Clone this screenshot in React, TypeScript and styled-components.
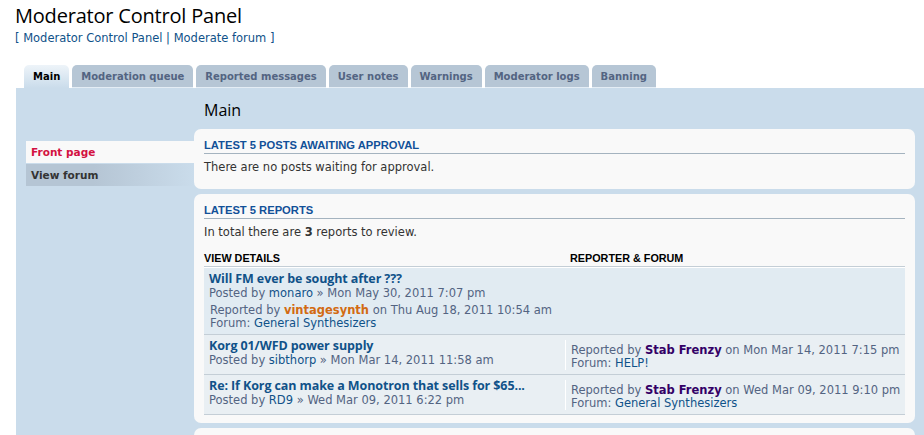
import styled, { createGlobalStyle } from 'styled-components';

const GlobalStyle = createGlobalStyle`
    html, body {
        margin: 0;
        padding: 0;
        background: #ffffff;
    }
    body {
        font-family: "DejaVu Sans", Verdana, sans-serif;
        font-size: 11.5px;
        color: #333333;
    }
    a {
        color: #105289;
        text-decoration: none;
    }
`;

const Page = styled.div`
    padding: 3px 0 0 16px;
    overflow: hidden;
    height: 435px;
    box-sizing: border-box;
`;

const Title = styled.h2`
    margin: 0 0 0 -1px;
    font-family: "Open Sans", "Liberation Sans", sans-serif;
    font-weight: normal;
    font-size: 20px;
    line-height: 26px;
    color: #000000;
    letter-spacing: -0.2px;
`;

const Crumbs = styled.p`
    margin: 2px 0 0 -1px;
    line-height: 14px;
    color: #105289;
`;

const Tabs = styled.ul`
    list-style: none;
    display: flex;
    gap: 3px;
    margin: 20px 0 0 8px;
    padding: 0;
`;

const Tab = styled.li<{ $active?: boolean }>`
    height: 23px;
    box-sizing: border-box;
    padding: 0 9px;
    display: flex;
    align-items: center;
    font-weight: bold;
    font-size: 10px;
    border-radius: 5px 5px 0 0;
    color: ${p => (p.$active ? '#000000' : '#536482')};
    background: ${p => (p.$active ? 'linear-gradient(#eef4f9, #cadceb)' : '#b6c6d5')};
    border-bottom: ${p => (p.$active ? 'none' : '1px solid #e4edf5')};
`;

const Panel = styled.div`
    background: #cadceb;
    display: grid;
    grid-template-columns: 168px 1fr;
    padding: 12px 10px 0 10px;
    min-height: 360px;
`;

const Menu = styled.ul`
    list-style: none;
    margin: 41px 0 0 0;
    padding: 0;
`;

const MenuItem = styled.li<{ $active?: boolean }>`
    height: 22px;
    display: flex;
    align-items: center;
    padding-left: 5px;
    margin-bottom: 1px;
    font-weight: bold;
    font-size: 10.5px;
    color: ${p => (p.$active ? '#d31141' : '#333333')};
    background: ${p => (p.$active ? '#f9f9f9' : 'linear-gradient(to right, #b5c5d4 40%, #cadceb)')};
`;

const Main = styled.div``;

const MainHeading = styled.h3`
    margin: 0 0 9px 10px;
    font-family: "Open Sans", "Liberation Sans", sans-serif;
    font-weight: normal;
    font-size: 16px;
    line-height: 20px;
    color: #000000;
`;

const Box = styled.div`
    background: #f9f9f9;
    border-radius: 7px;
    padding: 8px 10px 8px 10px;
    margin-bottom: 5px;
`;

const BoxTitle = styled.h3`
    margin: 0 0 6px 0;
    font-family: "Liberation Sans", Arial, sans-serif;
    font-weight: bold;
    font-size: 11.2px;
    line-height: 14px;
    text-transform: uppercase;
    color: #115098;
    border-bottom: 1px solid #a4b3bf;
    padding: 1px 0 1px 0;
`;

const Text = styled.p`
    margin: 0 0 6px 0;
    line-height: 15px;
`;

const Table = styled.div`
    margin-top: 12px;
    border-bottom: 1px solid #c4ced6;
`;

const HeadRow = styled.div`
    display: grid;
    grid-template-columns: 361px 1fr;
    font-family: "Liberation Sans", Arial, sans-serif;
    font-weight: bold;
    font-size: 10.8px;
    line-height: 13px;
    text-transform: uppercase;
    color: #000000;
    padding-bottom: 1px;
    border-bottom: 1px solid #c4ced6;
`;

const HeadCell = styled.div<{ $right?: boolean }>`
    padding-left: ${p => (p.$right ? '5px' : '0')};
`;

const Row = styled.div<{ $alt?: boolean }>`
    display: grid;
    grid-template-columns: 361px 1fr;
    background: ${p => (p.$alt ? '#e9eff3' : '#e1ebf2')};
    border-top: 1px solid #ffffff;
    & + & {
        border-top: 1px solid #c4ced6;
    }
`;

const Cell = styled.div`
    padding: 3px 5px 4px 5px;
`;

const SideCell = styled.div`
    margin: 5px 0 4px 0;
    padding: 4px 5px 0 5px;
    border-left: 1px solid #ffffff;
    line-height: 13px;
    white-space: nowrap;
    color: #536482;
`;

const TopicTitle = styled.a`
    display: block;
    font-family: "Open Sans", "Liberation Sans", sans-serif;
    font-weight: bold;
    font-size: 12.5px;
    line-height: 15px;
    letter-spacing: -0.1px;
    color: #105289;
`;

const Meta = styled.div`
    line-height: 14px;
    color: #536482;
`;

const Report = styled.div`
    margin-top: 4px;
    padding-left: 1px;
    line-height: 13px;
    color: #536482;
`;

const Name = styled.a<{ $color: string }>`
    font-weight: bold;
    color: ${p => p.$color};
`;

type Reported = { title: string; poster: string; posted: string; reporter: string; reported: string; forum: string; inline?: boolean };

const reports: Reported[] = [
    { title: 'Will FM ever be sought after ???', poster: 'monaro', posted: 'Mon May 30, 2011 7:07 pm', reporter: 'vintagesynth', reported: 'Thu Aug 18, 2011 10:54 am', forum: 'General Synthesizers', inline: true },
    { title: 'Korg 01/WFD power supply', poster: 'sibthorp', posted: 'Mon Mar 14, 2011 11:58 am', reporter: 'Stab Frenzy', reported: 'Mon Mar 14, 2011 7:15 pm', forum: 'HELP!' },
    { title: 'Re: If Korg can make a Monotron that sells for $65...', poster: 'RD9', posted: 'Wed Mar 09, 2011 6:22 pm', reporter: 'Stab Frenzy', reported: 'Wed Mar 09, 2011 9:10 pm', forum: 'General Synthesizers' },
];

const tabs = ['Main', 'Moderation queue', 'Reported messages', 'User notes', 'Warnings', 'Moderator logs', 'Banning'];

const App = () => (
    <>
        <GlobalStyle />
        <Page>
            <Title>Moderator Control Panel</Title>
            <Crumbs>[ <a href="#">Moderator Control Panel</a> | <a href="#">Moderate forum</a> ]</Crumbs>
            <Tabs>
                {tabs.map((t, i) => (
                    <Tab key={t} $active={i === 0}>{t}</Tab>
                ))}
            </Tabs>
            <Panel>
                <Menu>
                    <MenuItem $active>Front page</MenuItem>
                    <MenuItem>View forum</MenuItem>
                </Menu>
                <Main>
                    <MainHeading>Main</MainHeading>
                    <Box>
                        <BoxTitle>Latest 5 posts awaiting approval</BoxTitle>
                        <Text>There are no posts waiting for approval.</Text>
                    </Box>
                    <Box>
                        <BoxTitle>Latest 5 reports</BoxTitle>
                        <Text>In total there are <strong>3</strong> reports to review.</Text>
                        <Table>
                            <HeadRow>
                                <HeadCell>View details</HeadCell>
                                <HeadCell $right>Reporter &amp; Forum</HeadCell>
                            </HeadRow>
                            {reports.map((r, i) => {
                                const orange = r.reporter === 'vintagesynth';
                                const report = (
                                    <>
                                        Reported by <Name href="#" $color={orange ? '#d26a12' : '#330066'}>{r.reporter}</Name> on {r.reported}
                                        <br />
                                        Forum: <a href="#">{r.forum}</a>
                                    </>
                                );
                                return (
                                    <Row key={r.title} $alt={i > 0}>
                                        <Cell>
                                            <TopicTitle href="#">{r.title}</TopicTitle>
                                            <Meta>Posted by <a href="#">{r.poster}</a> » {r.posted}</Meta>
                                            {r.inline && <Report>{report}</Report>}
                                        </Cell>
                                        {r.inline ? <div /> : <SideCell>{report}</SideCell>}
                                    </Row>
                                );
                            })}
                        </Table>
                    </Box>
                    <Box />
                </Main>
            </Panel>
        </Page>
    </>
);

export default App;
